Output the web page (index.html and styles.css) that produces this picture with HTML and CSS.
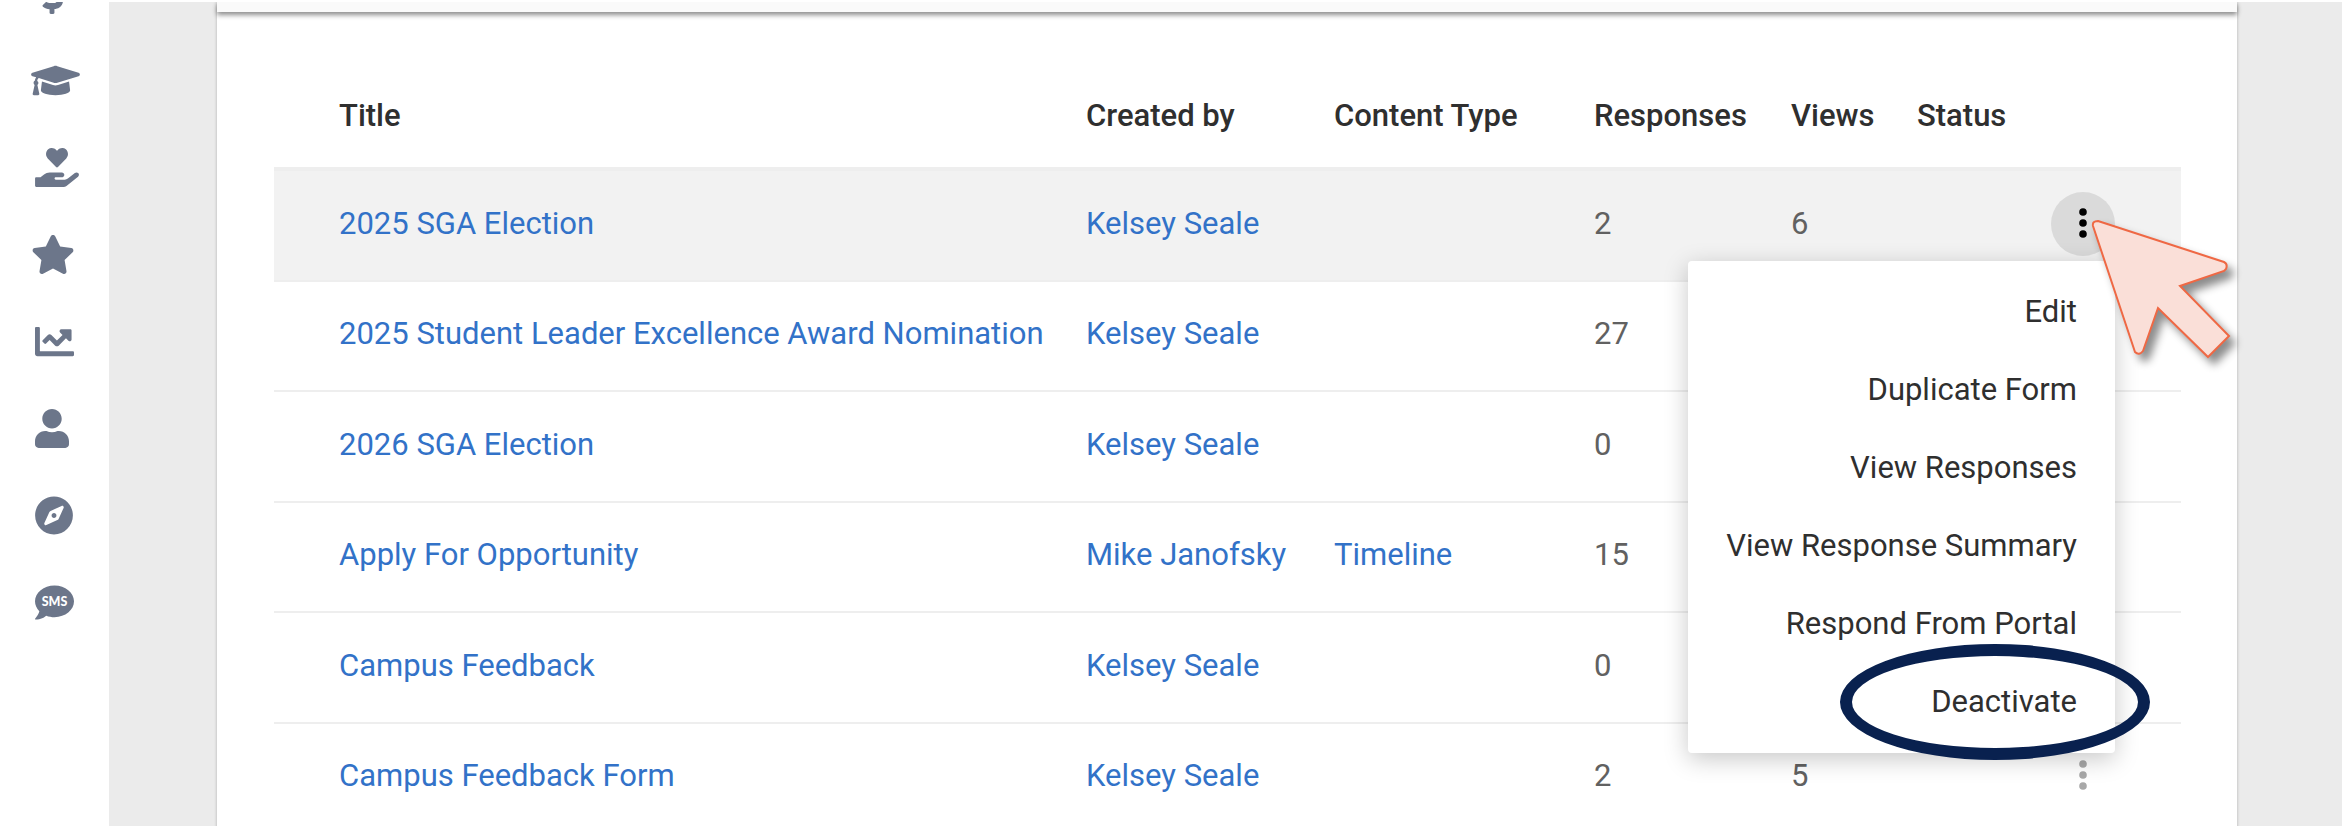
FILE: index.html
```html
<!DOCTYPE html>
<html lang="en">
<head>
<meta charset="UTF-8">
<meta name="viewport" content="width=device-width, initial-scale=1.0">
<title>Forms</title>
<link rel="stylesheet" href="styles.css">
</head>
<body>
<div class="app">
  <nav class="sidebar" aria-label="Main">
    <ul>
      <li class="cut"><a href="#" aria-label="Payments"><svg width="22" height="39" viewBox="0 0 288 512"><path d="M209.2 233.4l-108-31.6C88.7 198.2 80 186.5 80 173.5c0-16.3 13.2-29.5 29.5-29.5h66.3c12.2 0 24.2 3.7 34.2 10.5 6.100 4.100 14.300 3.100 19.500-2l34.800-34c7.100-6.900 6.100-18.400-1.800-24.500C238 74.800 207.400 64.100 176 64V16c0-8.800-7.200-16-16-16h-32c-8.800 0-16 7.200-16 16v48h-2.500C45.800 64-5.400 118.700.5 183.600c4.200 46.100 39.400 83.600 83.800 96.600l102.500 30c12.500 3.700 21.200 15.300 21.200 28.300 0 16.300-13.200 29.500-29.500 29.500h-66.300C100 368 88 364.300 78 357.500c-6.100-4.100-14.300-3.100-19.500 2l-34.800 34c-7.100 6.900-6.100 18.400 1.800 24.500 24.500 19.200 55.100 29.900 86.500 30v48c0 8.800 7.200 16 16 16h32c8.800 0 16-7.200 16-16v-48.200c46.600-.9 90.300-28.600 105.700-72.700 21.500-61.600-14.600-124.800-72.500-141.700z"/></svg></a></li>
      <li class="wide"><a href="#" aria-label="Academics"><svg width="49" height="39" viewBox="0 0 640 512"><path d="M622.34 153.2L343.4 67.5c-15.2-4.67-31.6-4.67-46.79 0L17.66 153.2c-23.54 7.23-23.54 38.36 0 45.59l48.63 14.94c-10.67 13.19-17.23 29.28-17.88 46.9C38.78 266.15 32 276.11 32 288c0 10.78 5.68 19.85 13.86 25.65L20.33 428.53C18.11 438.52 25.71 448 35.94 448h56.11c10.24 0 17.84-9.48 15.62-19.47L82.14 313.65C90.32 307.85 96 298.78 96 288c0-11.57-6.47-21.25-15.66-26.87.76-15.02 8.44-28.3 20.69-36.72L296.6 284.5c9.06 2.78 26.44 6.25 46.79 0l278.95-85.7c23.55-7.24 23.55-38.36 0-45.6zM352.79 315.09c-28.53 8.76-52.84 3.92-65.59 0l-145.02-44.55L128 384c0 35.35 85.96 64 192 64s192-28.65 192-64l-14.18-113.47-145.03 44.56z"/></svg></a></li>
      <li><a href="#" aria-label="Service"><svg width="44" height="39" viewBox="0 0 576 512"><path d="M275.3 250.5c7 7.4 18.4 7.4 25.5 0l108.9-114.2c31.6-33.2 29.8-88.2-5.6-118.8-30.8-26.7-76.7-21.9-104.900 7.700L288 36.900l-11.100-11.600C248.700-4.400 202.800-9.200 172 17.500c-35.300 30.600-37.200 85.600-5.600 118.800l108.900 114.200zm290 77.600c-11.800-10.700-30.200-10-42.600 0L430.300 402c-11.300 9.100-25.400 14-40 14H272c-8.800 0-16-7.200-16-16s7.200-16 16-16h78.300c15.900 0 30.700-10.900 33.300-26.600 3.300-20-12.100-37.400-31.600-37.400H192c-27 0-53.100 9.300-74.100 26.300L71.400 384H16c-8.800 0-16 7.200-16 16v96c0 8.800 7.200 16 16 16h356.800c14.500 0 28.600-4.900 40-14L564 377c15.200-12.100 16.400-35.300 1.300-48.900z"/></svg></a></li>
      <li class="wide"><a href="#" aria-label="Favorites"><svg width="44" height="39" viewBox="0 0 576 512"><path d="M259.3 17.8L194 150.2 47.9 171.5c-26.2 3.8-36.7 36.1-17.7 54.6l105.700 103-25 145.500c-4.500 26.300 23.200 46 46.400 33.700L288 439.600l130.700 68.700c23.200 12.200 50.900-7.400 46.400-33.700l-25-145.500 105.700-103c19-18.500 8.500-50.800-17.700-54.600L382 150.200 316.700 17.800c-11.700-23.600-45.600-23.900-57.400 0z"/></svg></a></li>
      <li><a href="#" aria-label="Reports"><svg width="39" height="39" viewBox="0 0 512 512"><path d="M496 384H64V80c0-8.84-7.16-16-16-16H16C7.16 64 0 71.16 0 80v336c0 17.67 14.33 32 32 32h464c8.84 0 16-7.16 16-16v-32c0-8.84-7.16-16-16-16zM464 96H345.94c-21.38 0-32.09 25.85-16.97 40.97l32.4 32.4L288 242.75l-73.37-73.37c-12.5-12.5-32.76-12.5-45.25 0l-68.69 68.69c-6.25 6.25-6.25 16.38 0 22.63l22.62 22.62c6.25 6.25 16.38 6.25 22.63 0L192 237.25l73.37 73.37c12.5 12.5 32.76 12.5 45.25 0l96-96 32.4 32.4c15.12 15.12 40.97 4.41 40.97-16.97V112c.01-8.84-7.15-16-15.99-16z"/></svg></a></li>
      <li><a href="#" aria-label="People"><svg width="34" height="39" viewBox="0 0 448 512"><path d="M224 256c70.7 0 128-57.3 128-128S294.7 0 224 0 96 57.3 96 128s57.3 128 128 128zm89.6 32h-16.700c-22.200 10.200-46.900 16-72.900 16s-50.600-5.800-72.900-16h-16.700C60.200 288 0 348.200 0 422.400V464c0 26.500 21.500 48 48 48h352c26.500 0 48-21.500 48-48v-41.600c0-74.200-60.200-134.400-134.400-134.400z"/></svg></a></li>
      <li><a href="#" aria-label="Explore"><svg width="38" height="39" viewBox="0 0 496 512"><path d="M225.38 233.37c-12.5 12.5-12.5 32.76 0 45.25 12.49 12.5 32.76 12.5 45.25 0 12.5-12.5 12.5-32.76 0-45.25-12.5-12.49-32.76-12.49-45.25 0zM248 8C111.03 8 0 119.03 0 256s111.03 248 248 248 248-111.03 248-248S384.97 8 248 8zm126.14 148.05L308.17 300.4a31.938 31.938 0 0 1-15.77 15.77l-144.34 65.97c-16.65 7.61-33.81-9.55-26.2-26.2l65.98-144.35a31.938 31.938 0 0 1 15.77-15.77l144.34-65.97c16.65-7.6 33.8 9.55 26.19 26.2z"/></svg></a></li>
      <li><a href="#" aria-label="SMS"><svg width="39" height="39" viewBox="0 0 512 512"><path d="M256 32C114.6 32 0 125.1 0 240c0 49.6 21.4 95 57 130.7C44.5 421.1 2.7 466 2.2 466.5c-2.2 2.3-2.8 5.7-1.500 8.700S4.800 480 8 480c66.300 0 116-31.800 140.600-51.400 32.700 12.300 69 19.400 107.400 19.400 141.400 0 256-93.100 256-208S397.400 32 256 32z"/><text class="sms" x="256" y="302" text-anchor="middle">SMS</text></svg></a></li>
    </ul>
  </nav>

  <main class="main">
    <div class="card">
      <div class="toolbar"></div>
      <div class="content">
        <table class="forms">
          <colgroup>
            <col>
            <col class="col-created">
            <col class="col-type">
            <col class="col-responses">
            <col class="col-views">
            <col class="col-status">
            <col class="col-actions">
          </colgroup>
          <thead>
            <tr>
              <th>Title</th>
              <th>Created by</th>
              <th>Content Type</th>
              <th>Responses</th>
              <th>Views</th>
              <th>Status</th>
              <th></th>
            </tr>
          </thead>
          <tbody>
            <tr class="active">
              <td><a href="#">2025 SGA Election</a></td>
              <td><a href="#">Kelsey Seale</a></td>
              <td></td>
              <td>2</td>
              <td>6</td>
              <td></td>
              <td>
                <div class="actions">
                  <button class="more" aria-label="More actions" aria-expanded="true"><svg width="8" height="30" viewBox="0 0 8 30"><circle cx="4" cy="4" r="3.8"/><circle cx="4" cy="15" r="3.8"/><circle cx="4" cy="26" r="3.8"/></svg></button>
                  <div class="menu" role="menu">
                    <button role="menuitem">Edit</button>
                    <button role="menuitem">Duplicate Form</button>
                    <button role="menuitem">View Responses</button>
                    <button role="menuitem">View Response Summary</button>
                    <button role="menuitem">Respond From Portal</button>
                    <button role="menuitem" class="circled">Deactivate</button>
                  </div>
                  <svg class="pointer" width="220" height="200" viewBox="0 0 220 200"><path d="M68 41 L194 82 Q198 84 196 89 L194 91 L150 106 L199 156 L178 177 L128 128 L113 171 Q109 176 105 172 L63 46 Q62 41 68 41 Z"/></svg>
                </div>
              </td>
            </tr>
            <tr>
              <td><a href="#">2025 Student Leader Excellence Award Nomination</a></td>
              <td><a href="#">Kelsey Seale</a></td>
              <td></td>
              <td>27</td>
              <td></td>
              <td></td>
              <td></td>
            </tr>
            <tr>
              <td><a href="#">2026 SGA Election</a></td>
              <td><a href="#">Kelsey Seale</a></td>
              <td></td>
              <td>0</td>
              <td></td>
              <td></td>
              <td></td>
            </tr>
            <tr>
              <td><a href="#">Apply For Opportunity</a></td>
              <td><a href="#">Mike Janofsky</a></td>
              <td><a href="#">Timeline</a></td>
              <td>15</td>
              <td></td>
              <td></td>
              <td></td>
            </tr>
            <tr>
              <td><a href="#">Campus Feedback</a></td>
              <td><a href="#">Kelsey Seale</a></td>
              <td></td>
              <td>0</td>
              <td></td>
              <td></td>
              <td></td>
            </tr>
            <tr>
              <td><a href="#">Campus Feedback Form</a></td>
              <td><a href="#">Kelsey Seale</a></td>
              <td></td>
              <td>2</td>
              <td>5</td>
              <td></td>
              <td>
                <div class="actions">
                  <button class="more" aria-label="More actions"><svg width="8" height="30" viewBox="0 0 8 30"><circle cx="4" cy="4" r="3.8"/><circle cx="4" cy="15" r="3.8"/><circle cx="4" cy="26" r="3.8"/></svg></button>
                </div>
              </td>
            </tr>
          </tbody>
        </table>
      </div>
    </div>
  </main>
</div>
</body>
</html>
```
FILE: styles.css
```css
*,
*::after {
  box-sizing: border-box;
}
body {
  margin: 0;
  height: 100vh;
  overflow: hidden;
  border-top: 2px solid #fff;
  background-color: #ebebeb;
  font-family: Roboto, sans-serif;
  font-size: 31px;
  line-height: 40px;
  color: #616161;
}
button {
  font: inherit;
  border: none;
  background: none;
  cursor: pointer;
}
a {
  color: #3272c8;
  text-decoration: none;
}
.app {
  display: flex;
  height: 100%;
}

/* Sidebar */
.sidebar {
  flex: 0 0 109px;
  background-color: #fff;
}
.sidebar ul {
  list-style: none;
  margin: 0;
  padding: 0;
}
.sidebar li {
  display: flex;
  align-items: center;
  height: 87px;
  padding-left: 35px;
}
.sidebar li.wide {
  padding-left: 31px;
}
/* scrolled partly out of view */
.sidebar li.cut {
  align-items: flex-end;
  height: 12px;
  margin-bottom: 23px;
  padding-left: 41px;
  overflow: hidden;
}
.sidebar svg {
  display: block;
  fill: #6c768a;
}
.sidebar .sms {
  fill: #fff;
  font-family: Lato, sans-serif;
  font-size: 164px;
  font-weight: 900;
}

/* Card */
.main {
  flex: 1;
  min-width: 0;
  padding: 0 105px 0 108px;
}
.card {
  min-height: 100%;
  background-color: #fff;
  box-shadow: 0 0 3px rgba(0, 0, 0, 0.25);
}
.toolbar {
  height: 10px;
  background-color: #fafafa;
  box-shadow: 0 3px 5px rgba(0, 0, 0, 0.45);
}
.content {
  padding: 56px 56px 0 57px;
}

/* Table */
.forms {
  width: 100%;
  table-layout: fixed;
  border-collapse: separate;
  border-spacing: 0;
}
.col-created {
  width: 248px;
}
.col-type {
  width: 260px;
}
.col-responses {
  width: 197px;
}
.col-views {
  width: 126px;
}
.col-status {
  width: 134px;
}
.col-actions {
  width: 130px;
}
.forms th,
.forms td {
  padding: 0 0 4px;
  text-align: left;
  vertical-align: middle;
  white-space: nowrap;
}
.forms th {
  height: 103px;
  border-bottom: 4px solid #eee;
  font-weight: 500;
  color: #2f2f2f;
}
.forms td {
  height: 110px;
  border-bottom: 2px solid #eee;
}
.forms tr:nth-child(odd) td {
  height: 111px;
}
.forms th:first-child,
.forms td:first-child {
  padding-left: 65px;
}
.active td {
  background-color: #f2f2f2;
}

/* Row actions */
.actions {
  position: relative;
  width: 64px;
}
.more {
  display: flex;
  align-items: center;
  justify-content: center;
  width: 64px;
  height: 64px;
  padding: 0 0 2px;
  border-radius: 50%;
  fill: #a8a8a8;
}
.active .more {
  background-color: #dadada;
  fill: #000;
}
.menu {
  position: absolute;
  top: 69px;
  right: 0;
  z-index: 1;
  padding: 12px 0;
  border-radius: 4px;
  background-color: #fff;
  box-shadow: 0 6px 24px rgba(0, 0, 0, 0.22);
}
.menu button {
  display: block;
  position: relative;
  width: 100%;
  height: 78px;
  padding: 0 38px;
  text-align: right;
  white-space: nowrap;
  color: #2f2f2f;
}
.circled::after {
  content: "";
  position: absolute;
  top: -19px;
  right: -35px;
  width: 310px;
  height: 116px;
  border: 12px solid #09214f;
  border-radius: 50%;
}
.pointer {
  position: absolute;
  top: -12px;
  left: -21px;
  z-index: 2;
  overflow: visible;
  pointer-events: none;
  fill: #fadfd8;
  stroke: #ef6844;
  stroke-width: 2;
  filter: drop-shadow(6px 7px 4px rgba(0, 0, 0, 0.45));
}
```
